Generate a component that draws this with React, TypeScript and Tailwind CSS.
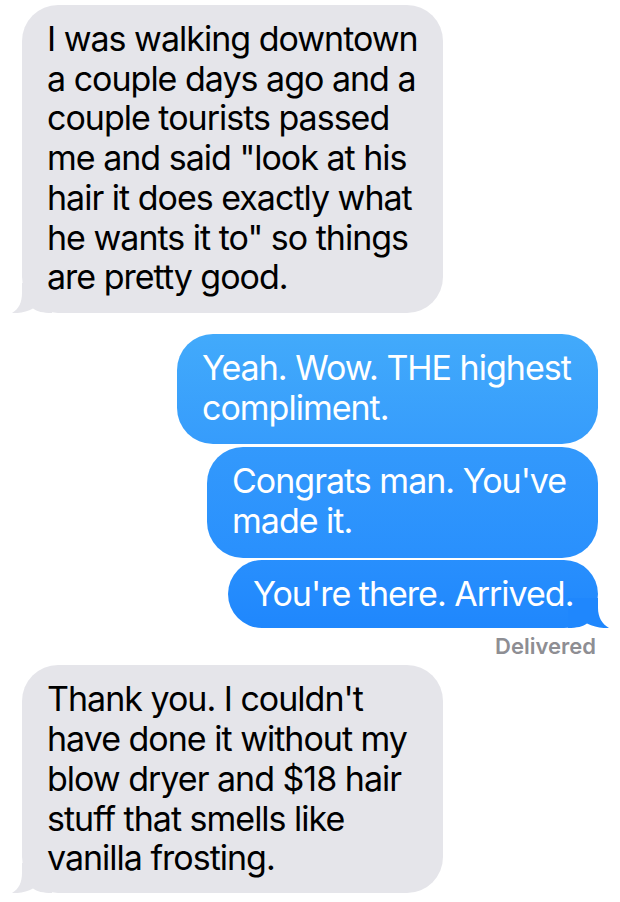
import React from "react";

const font = { fontFamily: "Inter, 'Noto Sans', sans-serif" };

function GrayTail() {
  return (
    <svg
      className="absolute bottom-0 left-[-10px]"
      width="40"
      height="30"
      viewBox="0 0 40 30"
    >
      <path
        d="M10 0 L10 10 C10 19 7 26 0 30 C7 30.5 15 29 21 25.5 C25 28.5 31 30 40 30 L40 0 Z"
        fill="#e5e5ea"
      />
    </svg>
  );
}

function BlueTail() {
  return (
    <svg
      className="absolute bottom-0 right-[-11px]"
      width="41"
      height="30"
      viewBox="0 0 41 30"
    >
      <path
        d="M30 0 L30 10 C30 19 34 26 41 30 C34 30.5 26 29 19 25.5 C15 28.5 9 30 0 30 L0 0 Z"
        fill="#1f87fd"
      />
    </svg>
  );
}

function Lines({ lines }: { lines: string[] }) {
  return (
    <>
      {lines.map((l, i) => (
        <div key={i} className="whitespace-nowrap">
          {l}
        </div>
      ))}
    </>
  );
}

export default function App() {
  return (
    <div className="w-[620px] h-[902px] bg-white overflow-hidden" style={font}>
      <div className="flex flex-col pt-[5px]">
        {/* incoming */}
        <div className="relative ml-[22px] w-[421px] rounded-[36px] bg-[#e5e5ea] pl-[25px] pt-[14px] pb-[16px] text-[34px] leading-[39.7px] tracking-[-1px] text-black">
          <GrayTail />
          <div className="relative">
            <Lines
              lines={[
                "I was walking downtown",
                "a couple days ago and a",
                "couple tourists passed",
                'me and said "look at his',
                "hair it does exactly what",
                'he wants it to" so things',
                "are pretty good.",
              ]}
            />
          </div>
        </div>

        {/* outgoing */}
        <div className="mt-[21px] flex flex-col items-end pr-[22px] text-[34px] leading-[39.7px] tracking-[-1px] text-white">
          <div className="w-[421px] rounded-[36px] bg-gradient-to-b from-[#42aafb] to-[#369cfc] pl-[25px] pt-[14px] pb-[17px]">
            <Lines lines={["Yeah. Wow. THE highest", "compliment."]} />
          </div>
          <div className="mt-[3px] w-[391px] rounded-[36px] bg-gradient-to-b from-[#3399fc] to-[#2990fd] pl-[25px] pt-[14px] pb-[17px]">
            <Lines lines={["Congrats man. You've", "made it."]} />
          </div>
          <div className="relative mt-[2px] w-[370px] rounded-[36px] bg-gradient-to-b from-[#288ffd] to-[#1f87fd] pl-[25px] pt-[14px] pb-[15px]">
            <BlueTail />
            <div className="relative">
              <Lines lines={["You're there. Arrived."]} />
            </div>
          </div>
        </div>

        <div className="mt-[6px] pr-[24px] text-right text-[22px] leading-[24px] font-semibold text-[#8e8e93]">
          Delivered
        </div>

        {/* incoming */}
        <div className="relative mt-[7px] ml-[22px] w-[421px] rounded-[36px] bg-[#e5e5ea] pl-[25px] pt-[14px] pb-[15px] text-[34px] leading-[39.7px] tracking-[-1px] text-black">
          <GrayTail />
          <div className="relative">
            <Lines
              lines={[
                "Thank you. I couldn't",
                "have done it without my",
                "blow dryer and $18 hair",
                "stuff that smells like",
                "vanilla frosting.",
              ]}
            />
          </div>
        </div>
      </div>
    </div>
  );
}
